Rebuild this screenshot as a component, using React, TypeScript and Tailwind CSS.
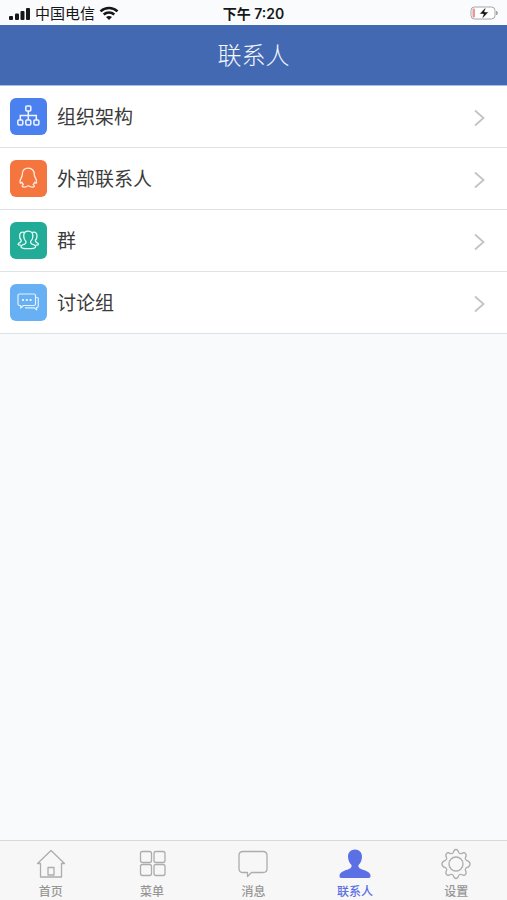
import type { ReactNode } from "react";

function OrgIcon() {
  return (
    <svg viewBox="0 0 37 37" className="size-full" fill="none" stroke="#f1f5ff" strokeWidth="1.5" aria-hidden="true">
      <rect x="15.8" y="8" width="5" height="5" rx="1" />
      <path d="M18.3 13v9M10.3 22v-4.400h16V22" />
      <rect x="7.8" y="22" width="5" height="5" rx="1.2" />
      <rect x="15.8" y="22" width="5" height="5" rx="1.2" />
      <rect x="23.9" y="22" width="5" height="5" rx="1.2" />
    </svg>
  );
}

function PenguinIcon() {
  return (
    <svg viewBox="0 0 37 37" className="size-full" fill="none" stroke="#ffe9df" strokeWidth="1.300" strokeLinejoin="round" aria-hidden="true">
      <path d="M18.300 8.200c-4 0-6 2.700-6 6.200 0 .8-.1 1.500-.5 2.200-1.200 2-2.100 4.200-1.700 6.200.3 1 1.200.3 1.900-.6.3 1 .8 1.700 1.400 2.300-2 1.200-1.300 2.600.8 2.600 1.600 0 2.800-.4 3.600-1.200h1c.8.800 2 1.200 3.600 1.200 2.100 0 2.800-1.400.8-2.600.6-.6 1.100-1.300 1.400-2.300.7.900 1.600 1.600 1.900.6.400-2-.5-4.200-1.700-6.200-.4-.7-.5-1.400-.5-2.200 0-3.500-2-6.200-6-6.200Z" />
    </svg>
  );
}

function GroupIcon() {
  return (
    <svg viewBox="0 0 37 37" className="size-full" fill="none" stroke="#e2fff6" strokeWidth="1.300" strokeLinecap="round" strokeLinejoin="round" aria-hidden="true">
      <path d="M18.300 9.200c-3 0-4.600 2-4.600 4.800 0 2.200.9 4.300 2.300 5.500.3 1.300-.1 2-1.400 2.600-2 .8-3.700 1.200-3.700 2.600 0 1.300 2.800 1.900 7.400 1.900s7.400-.6 7.400-1.900c0-1.400-1.700-1.800-3.700-2.600-1.300-.6-1.700-1.300-1.400-2.600 1.400-1.200 2.300-3.300 2.300-5.500 0-2.800-1.600-4.800-4.600-4.800Z" />
      <path d="M14 10.400c-2.700-1-4.400.8-4.400 3.500 0 1.900.6 3.300 1.600 4.300.2 1.300-.2 1.900-1.400 2.400-1.200.4-1.700 1-1.700 1.600 0 .6.900.9 2.300 1M22.600 10.400c2.700-1 4.400.8 4.400 3.500 0 1.900-.6 3.300-1.600 4.300-.2 1.300.2 1.900 1.400 2.400 1.200.4 1.700 1 1.700 1.600 0 .6-.9.9-2.300 1" />
    </svg>
  );
}

function DiscussionIcon() {
  return (
    <svg viewBox="0 0 37 37" className="size-full" fill="none" stroke="#e2f1ff" strokeWidth="1.200" strokeLinejoin="round" aria-hidden="true">
      <path d="M9.500 10h14.500q1.500 0 1.500 1.500v8.500q0 1.500-1.500 1.500H13.500l-2.800 2.500v-2.500H9.500Q8 21.500 8 20v-8.500Q8 10 9.500 10Z" />
      <path d="M25.500 13.500H27q1.300 0 1.300 1.300V22q0 1.300-1.300 1.300h-.4v2.500l-2.500-2H15" />
      <path d="M12 16h2M15.800 16h2M19.600 16h2" strokeWidth="1.800" />
    </svg>
  );
}

const rows: { label: string; tile: string; icon: ReactNode }[] = [
  { label: "组织架构", tile: "bg-[#4b80ef]", icon: <OrgIcon /> },
  { label: "外部联系人", tile: "bg-[#f5753f]", icon: <PenguinIcon /> },
  { label: "群", tile: "bg-[#22ac98]", icon: <GroupIcon /> },
  { label: "讨论组", tile: "bg-[#68b0f4]", icon: <DiscussionIcon /> },
];

const tabs: { label: string; active?: boolean; icon: ReactNode }[] = [
  {
    label: "首页",
    icon: <path d="M5.500 15.500H2.500L16 2.500l13.500 13H26.500V29H5.500ZM13 27v-7.500h6V27Z" />,
  },
  {
    label: "菜单",
    icon: (
      <>
        <rect x="4.500" y="3.500" width="11" height="11" rx="2" />
        <rect x="18" y="3.500" width="11" height="11" rx="2" />
        <rect x="4.500" y="16.500" width="11" height="11" rx="2" />
        <rect x="18" y="16.500" width="11" height="11" rx="2" />
      </>
    ),
  },
  {
    label: "消息",
    icon: <path d="M5 3.500h20q4 0 4 4v13q0 4-4 4H13.500l-4 4v-4H5q-4 0-4-4v-13q0-4 4-4Z" />,
  },
  {
    label: "联系人",
    active: true,
    icon: (
      <path
        fill="currentColor"
        stroke="none"
        d="M16 1.500c-4.200 0-7 2.900-7 7 0 3.600 1.500 6.700 3.500 8.500.4 2-.3 3-2.500 3.900C5 22.700.5 24 .5 27.800c0 1.700.4 2.200 2 2.200h27c1.600 0 2-.5 2-2.200 0-3.800-4.500-5.100-9.500-6.900-2.200-.9-2.900-1.900-2.500-3.900 2-1.800 3.500-4.900 3.500-8.500 0-4.100-2.800-7-7-7Z"
      />
    ),
  },
  {
    label: "设置",
    icon: (
      <>
        <circle cx="16" cy="16" r="7" />
        <path d="M13.300 4.400C14 2 14.500 1.500 16 1.500s2 .5 2.700 2.900c.3 1 1.900 1.600 2.800 1.100 2.200-1.200 2.900-1.200 3.900-.1s1.300 1.900.1 4.100c-.5.900.1 2.500 1.100 2.800 2.400.7 3.400 1.200 3.400 3.700s-1 3-3.400 3.700c-1 .3-1.600 1.900-1.100 2.800 1.200 2.200.9 3-.1 4.100s-1.700 1.100-3.900-.1c-.9-.5-2.500.1-2.800 1.100-.7 2.400-1.200 2.900-2.700 2.900s-2-.5-2.700-2.900c-.3-1-1.900-1.600-2.800-1.100-2.200 1.200-2.900 1.200-3.900.1s-1.300-1.900-.1-4.100c.5-.9-.1-2.500-1.100-2.800C3 19 2 18.500 2 16s1-3 3.400-3.700c1-.3 1.600-1.900 1.100-2.800-1.200-2.200-.9-3 .1-4.100s1.700-1.100 3.900.1c.9.5 2.500-.1 2.800-1.100Z" />
      </>
    ),
  },
];

function StatusBar() {
  return (
    <div className="flex h-[25px] items-center bg-[#f9fbfd] px-2 pt-[2px] text-[15px] leading-5 text-[#171717]">
      <div className="flex flex-1 items-center gap-1">
        <svg viewBox="0 0 23 14" className="h-[14px] w-[23px]" fill="currentColor" role="img" aria-label="信号">
          <rect x="1" y="9" width="4" height="4" rx="1" />
          <rect x="7" y="6.500" width="4" height="6.500" rx="1" />
          <rect x="12.500" y="4" width="4" height="9" rx="1" />
          <rect x="18" y="1" width="4" height="12" rx="1" />
        </svg>
        <span>中国电信</span>
        <svg viewBox="0 0 20 15" className="h-[15px] w-5" role="img" aria-label="无线网络">
          <path d="M1.500 5.300c4.900-4.500 12.100-4.500 17 0M4.700 8.500c3-2.700 7.600-2.700 10.600 0" fill="none" stroke="currentColor" strokeWidth="2.500" />
          <path d="M7 11c1.800-1.500 4.200-1.500 6 0l-3 3Z" fill="currentColor" />
        </svg>
      </div>
      <time className="text-[14px] font-semibold">下午 7:20</time>
      <div className="flex flex-1 justify-end">
        <svg viewBox="0 0 31 15" className="h-[15px] w-[31px]" role="img" aria-label="电池充电中">
          <rect x="3" y="1" width="24" height="12" rx="3.500" fill="#ffffff" stroke="#a5a5a5" />
          <rect x="4.500" y="2.500" width="2.500" height="9" rx="1" fill="#e59a99" />
          <path d="M28.500 5q2 2 0 4Z" fill="#a5a5a5" stroke="#a5a5a5" />
          <path d="M18 1 11.500 8h4l-1.500 5 6.500-7h-4Z" fill="#111111" stroke="#ffffff" strokeWidth=".5" />
        </svg>
      </div>
    </div>
  );
}

export default function App() {
  return (
    <div className="flex min-h-screen flex-col bg-[#f8fafc] font-['Inter','Noto_Sans_CJK_SC',sans-serif]">
      <StatusBar />
      <header className="flex h-[61px] items-center justify-center border-b border-[#a9bfe6] bg-[#4369b3] pt-[2px]">
        <h1 className="text-2xl font-light text-[#f5f8ff]">联系人</h1>
      </header>
      <main className="flex-1">
        <ul>
          {rows.map((row) => (
            <li key={row.label}>
              <button type="button" className="flex h-[62px] w-full items-center border-b border-[#dfe2e6] bg-white pr-5 pl-[10px] text-left">
                <span className={`size-[37px] shrink-0 rounded-md ${row.tile}`}>{row.icon}</span>
                <span className="ml-[10px] flex-1 pt-[2px] text-[19px] leading-7 text-[#3b3b3b]">{row.label}</span>
                <svg viewBox="0 0 16 18" className="mt-[2px] h-[18px] w-4" fill="none" stroke="#c3c3c3" strokeWidth="1.800" aria-hidden="true">
                  <path d="m4 1.500 8.500 7.500L4 16.500" />
                </svg>
              </button>
            </li>
          ))}
        </ul>
      </main>
      <nav className="flex h-[60px] border-t border-[#d5d9e0] bg-[#f7f7f8]">
        {tabs.map((tab) => (
          <button
            key={tab.label}
            type="button"
            aria-current={tab.active ? "page" : undefined}
            className={`flex flex-1 flex-col items-center gap-1 pt-[7px] ${tab.active ? "text-[#5b70e4]" : "text-[#969696]"}`}
          >
            <svg viewBox="0 0 32 32" className="size-8" fill="none" stroke={tab.active ? "none" : "#adadad"} strokeWidth="1.300" strokeLinejoin="round" aria-hidden="true">
              {tab.icon}
            </svg>
            <span className="text-[12px] leading-4 font-medium">{tab.label}</span>
          </button>
        ))}
      </nav>
    </div>
  );
}
